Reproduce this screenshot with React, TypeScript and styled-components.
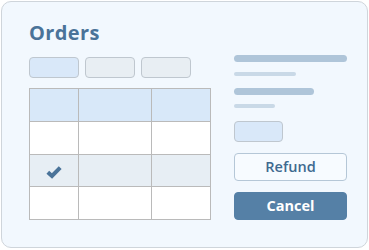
import React from "react";
import styled, { createGlobalStyle } from "styled-components";

const Global = createGlobalStyle`
  html, body { margin: 0; padding: 0; background: #ffffff; }
  body { font-family: "Open Sans", "Liberation Sans", sans-serif; }
`;

const Page = styled.div`
  padding: 1px 0 0 1px;
  width: 369px;
  height: 250px;
  box-sizing: border-box;
`;

const Card = styled.div`
  width: 367px;
  height: 247px;
  box-sizing: border-box;
  border: 1px solid #cfd5db;
  border-radius: 10px;
  background: #f2f8fe;
  padding: 17px 20px 0 27px;
  display: grid;
  grid-template-columns: 182px 113px;
  column-gap: 23px;
  grid-template-rows: auto 1fr;
  align-items: start;
`;

const Title = styled.h1`
  grid-column: 1 / -1;
  margin: 0;
  font-family: "Open Sans", sans-serif;
  font-weight: 700;
  font-size: 20px;
  line-height: 28px;
  color: #4a7399;
  letter-spacing: 0.4px;
`;

const LeftCol = styled.div`
  display: flex;
  flex-direction: column;
  gap: 10px;
  padding-top: 10px;
`;

const Tabs = styled.div`
  display: flex;
  gap: 6px;
`;

const Tab = styled.div<{ $active?: boolean }>`
  width: 50px;
  height: 21px;
  box-sizing: border-box;
  border: 1px solid #bfc7cf;
  border-radius: 4px;
  background: ${(p) => (p.$active ? "#d9e8f9" : "#e8eef3")};
`;

const Table = styled.div`
  display: grid;
  grid-template-columns: 48px 72px 58px;
  grid-template-rows: 32px 32px 31px 32px;
  gap: 1px;
  border: 1px solid #bababa;
  background: #bababa;
  width: 182px;
  box-sizing: border-box;
`;

const Cell = styled.div<{ $kind: "head" | "plain" | "sel" }>`
  background: ${(p) =>
    p.$kind === "head" ? "#d8e8f9" : p.$kind === "sel" ? "#e7eef4" : "#ffffff"};
  display: flex;
  align-items: center;
  justify-content: center;
`;

const RightCol = styled.div`
  display: flex;
  flex-direction: column;
  align-items: flex-start;
  padding-top: 8px;
`;

const Bar = styled.div<{ $w: number; $thick?: boolean; $mt: number }>`
  width: ${(p) => p.$w}px;
  height: ${(p) => (p.$thick ? 7 : 4)}px;
  border-radius: 4px;
  background: ${(p) => (p.$thick ? "#afc5d9" : "#c9d9e7")};
  margin-top: ${(p) => p.$mt}px;
`;

const Chip = styled.div`
  width: 49px;
  height: 21px;
  box-sizing: border-box;
  border: 1px solid #bfc7cf;
  border-radius: 4px;
  background: #d9e8f9;
  margin-top: 13px;
`;

const Button = styled.button<{ $primary?: boolean; $mt: number }>`
  width: 113px;
  height: 28px;
  box-sizing: border-box;
  margin-top: ${(p) => p.$mt}px;
  border-radius: 4px;
  border: 1px solid ${(p) => (p.$primary ? "#5580a6" : "#b5c7d7")};
  background: ${(p) => (p.$primary ? "#5580a6" : "#f7fbff")};
  color: ${(p) => (p.$primary ? "#ffffff" : "#3f6a90")};
  font-family: "Open Sans", sans-serif;
  font-weight: ${(p) => (p.$primary ? 700 : 600)};
  font-size: 14.5px;
  line-height: 1;
  padding: 0;
  display: flex;
  align-items: center;
  justify-content: center;
`;

const Check = () => (
  <svg width="16" height="14" viewBox="0 0 16 14" style={{ marginTop: 2 }}>
    <path
      d="M1.8 7.2 L6 11 L14.2 2.6"
      fill="none"
      stroke="#4a7399"
      strokeWidth="4"
      strokeLinejoin="miter"
    />
  </svg>
);

export default function App() {
  const rows: ("head" | "plain" | "sel")[] = ["head", "plain", "sel", "plain"];
  return (
    <>
      <Global />
      <Page>
        <Card>
          <Title>Orders</Title>
          <LeftCol>
            <Tabs>
              <Tab $active />
              <Tab />
              <Tab />
            </Tabs>
            <Table>
              {rows.map((k, r) =>
                [0, 1, 2].map((c) => (
                  <Cell key={`${r}-${c}`} $kind={k}>
                    {k === "sel" && c === 0 ? <Check /> : null}
                  </Cell>
                ))
              )}
            </Table>
          </LeftCol>
          <RightCol>
            <Bar $w={113} $thick $mt={0} />
            <Bar $w={62} $mt={10} />
            <Bar $w={80} $thick $mt={12} />
            <Bar $w={41} $mt={9} />
            <Chip />
            <Button $mt={11}>Refund</Button>
            <Button $primary $mt={11}>Cancel</Button>
          </RightCol>
        </Card>
      </Page>
    </>
  );
}
